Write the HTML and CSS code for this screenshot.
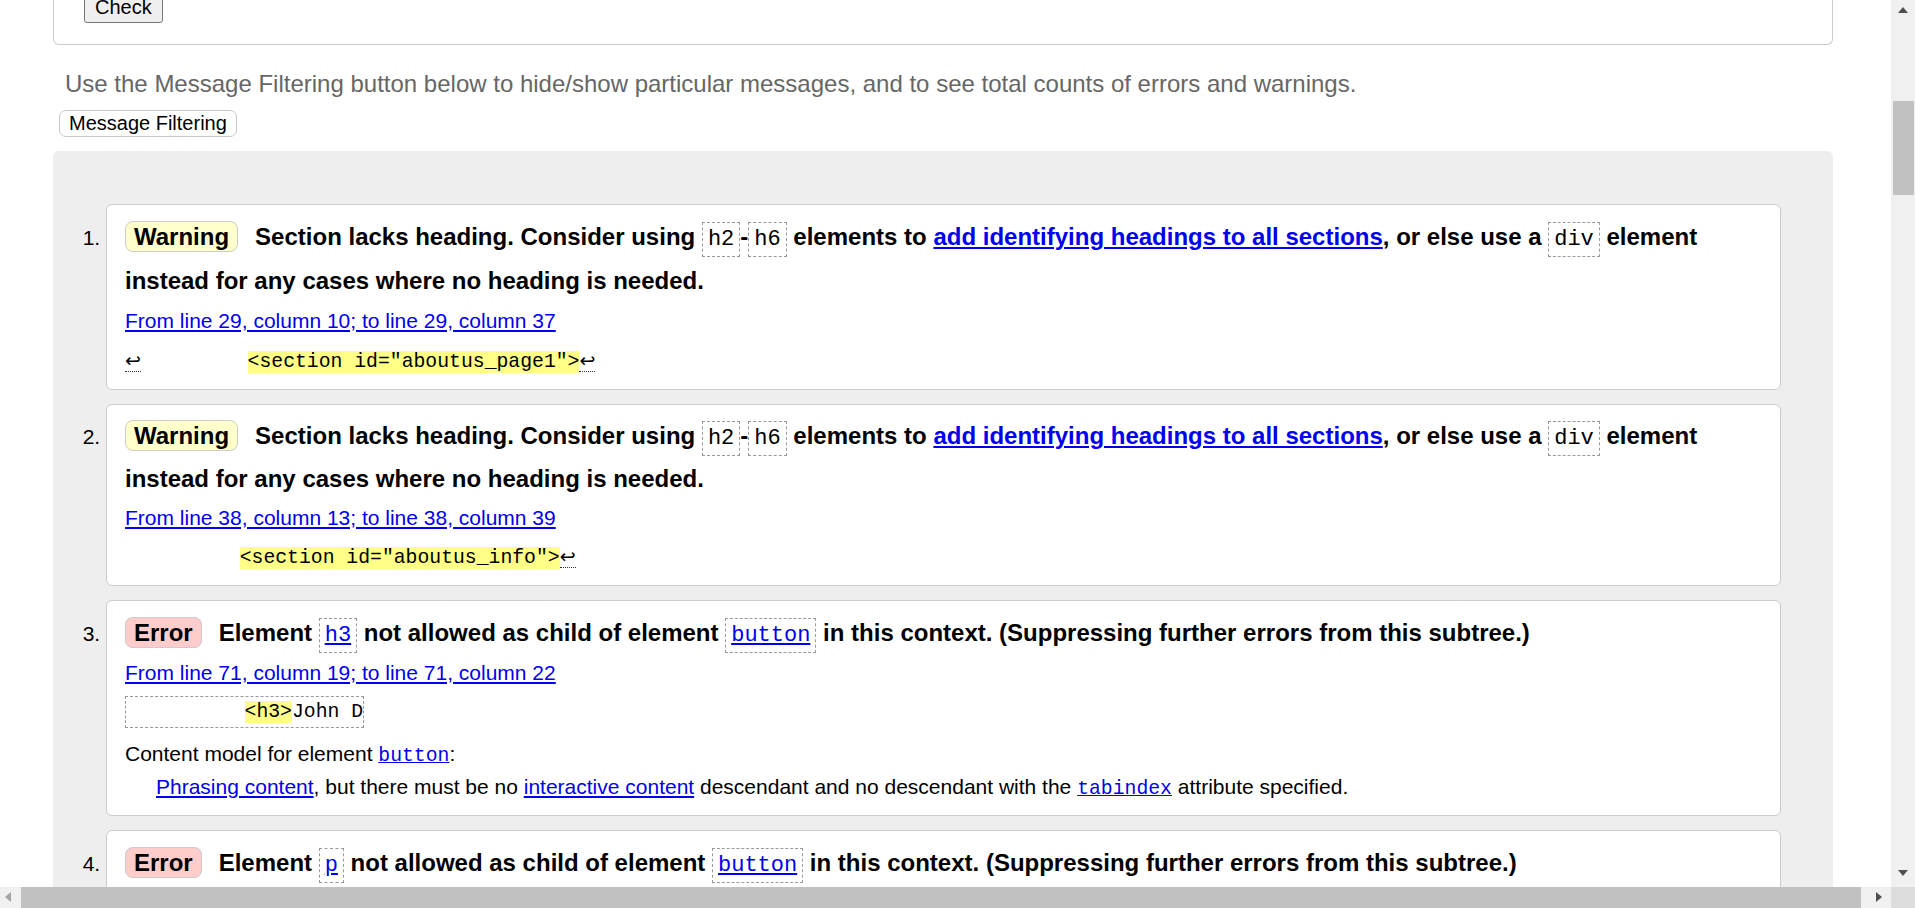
FILE: index.html
```html
<!DOCTYPE html>
<html lang="en">
<head>
<meta charset="utf-8">
<title>Nu Html Checker</title>
<link rel="stylesheet" href="styles.css">
</head>
<body>
<div class="page">
  <div class="form-box">
    <button class="check-btn" type="button">Check</button>
  </div>
  <p class="filter-note">Use the Message Filtering button below to hide/show particular messages, and to see total counts of errors and warnings.</p>
  <button class="filter-btn" type="button">Message Filtering</button>
  <div class="results">
    <ol class="messages">
      <li class="card">
        <p class="msg"><strong class="badge warning">Warning</strong>Section lacks heading. Consider using <code>h2</code>-<code>h6</code> elements to <a href="#">add identifying headings to all sections</a>, or else use a <code>div</code> element instead for any cases where no heading is needed.</p>
        <p class="location"><a href="#">From line 29, column 10; to line 29, column 37</a></p>
        <p class="extract"><code><span class="lf">↩</span>         <b>&lt;section id="aboutus_page1"&gt;</b><span class="lf">↩</span></code></p>
      </li>
      <li class="card card-compact">
        <p class="msg"><strong class="badge warning">Warning</strong>Section lacks heading. Consider using <code>h2</code>-<code>h6</code> elements to <a href="#">add identifying headings to all sections</a>, or else use a <code>div</code> element instead for any cases where no heading is needed.</p>
        <p class="location"><a href="#">From line 38, column 13; to line 38, column 39</a></p>
        <p class="extract extract-shift"><code>         <b>&lt;section id="aboutus_info"&gt;</b><span class="lf">↩</span></code></p>
      </li>
      <li class="card">
        <p class="msg"><strong class="badge error">Error</strong>Element <code><a href="#">h3</a></code> not allowed as child of element <code><a href="#">button</a></code> in this context. (Suppressing further errors from this subtree.)</p>
        <p class="location"><a href="#">From line 71, column 19; to line 71, column 22</a></p>
        <div class="extract"><code class="extract-box">          <b>&lt;h3&gt;</b>John D</code></div>
        <p class="model">Content model for element <code><a href="#">button</a></code>:</p>
        <p class="model-desc"><a href="#">Phrasing content</a>, but there must be no <a href="#">interactive content</a> descendant and no descendant with the <code><a href="#">tabindex</a></code> attribute specified.</p>
      </li>
      <li class="card">
        <p class="msg"><strong class="badge error">Error</strong>Element <code><a href="#">p</a></code> not allowed as child of element <code><a href="#">button</a></code> in this context. (Suppressing further errors from this subtree.)</p>
        <p class="location"><a href="#">From line 72, column 19; to line 72, column 21</a></p>
        <div class="extract"><code class="extract-box">          <b>&lt;p&gt;</b>Founder</code></div>
      </li>
    </ol>
  </div>
</div>

<div class="vscroll">
  <span class="arrow arrow-up"></span>
  <span class="vthumb"></span>
  <span class="arrow arrow-down"></span>
</div>
<div class="hscroll">
  <span class="arrow arrow-left"></span>
  <span class="hthumb"></span>
  <span class="arrow arrow-right"></span>
</div>
<div class="scroll-corner"></div>
</body>
</html>
```
FILE: styles.css
```css
* { box-sizing: border-box; }

html, body {
  margin: 0;
  padding: 0;
  height: 100%;
  overflow: hidden;
}

body {
  font-family: "Liberation Sans", Arial, sans-serif;
  font-size: 21px;
  color: #000;
  background: #fff;
}

.page {
  width: 1780px;
  margin-left: 53px;
}

/* top form box (scrolled, top part cut off) */
.form-box {
  height: 45px;
  border: 1px solid #ccc;
  border-top: none;
  border-radius: 0 0 6px 6px;
  padding-left: 30px;
  overflow: hidden;
}

.check-btn {
  display: block;
  margin-top: -9px;
  height: 32px;
  padding: 0 10px;
  font: 20px "Liberation Sans", Arial, sans-serif;
  color: #000;
  background: #efefef;
  border: 1px solid #767676;
  border-radius: 3px;
}

.filter-note {
  margin: 25px 0 0;
  padding-left: 12px;
  font-size: 24px;
  line-height: 28px;
  color: #666;
}

.filter-btn {
  display: block;
  margin: 12px 0 0 6px;
  height: 27px;
  padding: 0 9px;
  font: 20px/23px "Liberation Sans", Arial, sans-serif;
  color: #000;
  background: #fff;
  border: 1px solid #c8c8c8;
  border-radius: 7px;
}

.results {
  margin-top: 14px;
  background: #eee;
  border-radius: 6px;
  padding: 53px 52px 40px 0;
}

.messages {
  margin: 0;
  padding: 0 0 0 53px;
}

.card {
  background: #fff;
  border: 1px solid #ccc;
  border-radius: 6px;
  padding: 10px 18px 13px;
  margin: 0 0 14px;
  font-size: 21px;
}

.card-compact { padding-top: 9px; }

.card p { margin: 0; }

a { color: #00e; text-decoration: underline; }

.msg {
  font-size: 24px;
  font-weight: bold;
  line-height: 44px;
}

.card-compact .msg { line-height: 43px; }

.msg code {
  font-family: "Liberation Mono", "DejaVu Sans Mono", monospace;
  font-size: 22px;
  font-weight: normal;
  line-height: 16px;
  padding: 4px 5px;
  border: 1px dashed #999;
}

.badge {
  display: inline;
  margin-right: 17px;
  padding: 1px 8px;
  border: 1px solid #ccc;
  border-radius: 8px;
  line-height: 16px;
}

.badge.warning { background: #ffc; }
.badge.error { background: #fcc; }

.card .location {
  margin-top: 3px;
  line-height: 30px;
  height: 30px;
}

.card .extract {
  margin-top: 8px;
  line-height: 32px;
  height: 32px;
}

.card .extract-shift { margin-top: 7px; }

.extract code {
  font-family: "Liberation Mono", "DejaVu Sans Mono", monospace;
  font-size: 19.75px;
  line-height: 16px;
  white-space: pre;
}

.extract b {
  font-weight: normal;
  background: #ff8;
}

.extract .lf {
  font-family: "DejaVu Sans", sans-serif;
  font-size: 19px;
  line-height: 16px;
  border-bottom: 1px dotted #333;
}

.extract-shift code { padding-left: 8px; }

.extract .extract-box {
  display: block;
  width: fit-content;
  height: 32px;
  line-height: 30px;
  border: 1px dashed #999;
}

.card .model {
  margin-top: 11px;
  line-height: 30px;
  height: 30px;
}

.card .model-desc {
  margin: 3px 0 0 31px;
  line-height: 30px;
  height: 30px;
}

.model code, .model-desc code {
  font-family: "Liberation Mono", "DejaVu Sans Mono", monospace;
  font-size: 19.75px;
  line-height: 16px;
}

/* emulated browser scrollbars */
.vscroll {
  position: fixed;
  top: 0;
  right: 0;
  width: 24px;
  height: 887px;
  background: #f0f0f0;
}

.vthumb {
  position: absolute;
  left: 2px;
  top: 101px;
  width: 21px;
  height: 94px;
  background: #c1c1c1;
}

.hscroll {
  position: fixed;
  left: 0;
  bottom: 0;
  width: 1891px;
  height: 21px;
  background: #f0f0f0;
}

.hthumb {
  position: absolute;
  left: 21px;
  top: 0;
  width: 1840px;
  height: 21px;
  background: #c1c1c1;
}

.scroll-corner {
  position: fixed;
  right: 0;
  bottom: 0;
  width: 24px;
  height: 21px;
  background: #dcdcdc;
}

.arrow {
  position: absolute;
  width: 0;
  height: 0;
}

.arrow-up {
  left: 7px;
  top: 7px;
  border-left: 5.5px solid transparent;
  border-right: 5.5px solid transparent;
  border-bottom: 6px solid #505050;
}

.arrow-down {
  left: 7px;
  top: 870px;
  border-left: 5.5px solid transparent;
  border-right: 5.5px solid transparent;
  border-top: 6px solid #505050;
}

.arrow-left {
  left: 5px;
  top: 5px;
  border-top: 5.5px solid transparent;
  border-bottom: 5.5px solid transparent;
  border-right: 6px solid #a3a3a3;
}

.arrow-right {
  left: 1876px;
  top: 5px;
  border-top: 5.5px solid transparent;
  border-bottom: 5.5px solid transparent;
  border-left: 6px solid #505050;
}
```
